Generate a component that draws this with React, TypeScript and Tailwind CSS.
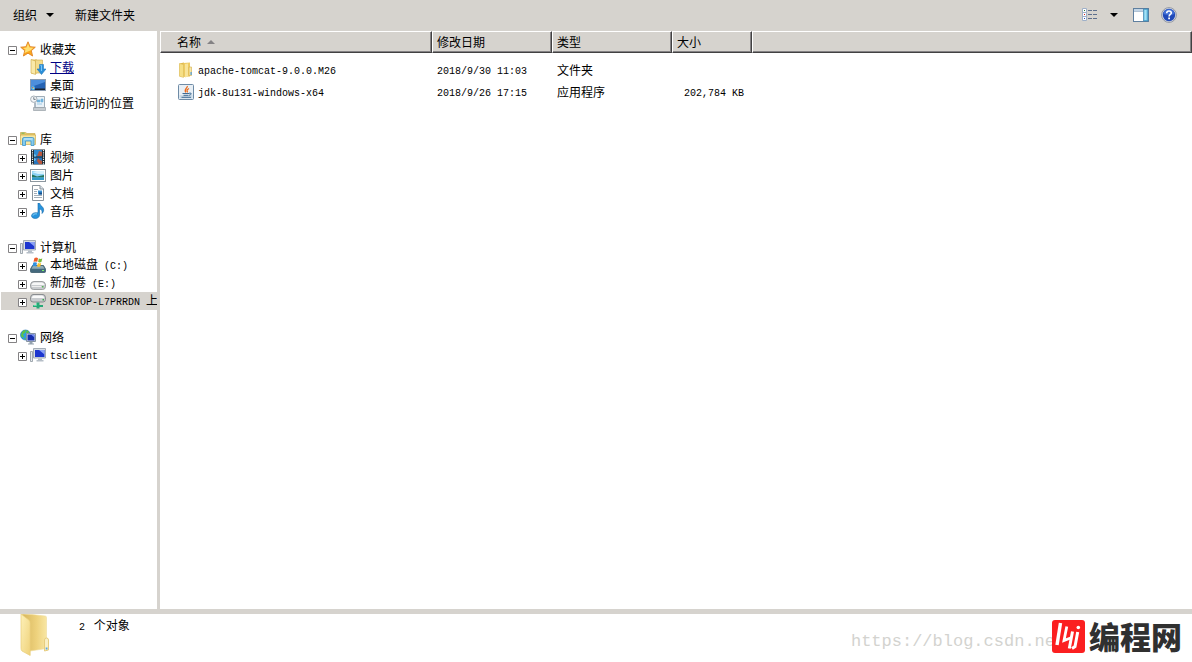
import React, { useState } from 'react';

interface TreeNode {
  id: string;
  label: string;
  latin?: string;
  tail?: string;
  icon: React.FC;
  expandable?: boolean;
  hot?: boolean;
}

interface TreeGroup extends TreeNode {
  children: TreeNode[];
}

interface FileEntry {
  name: string;
  modified: string;
  type: string;
  size?: string;
  icon: React.FC;
}

const Icon: React.FC<{ children: React.ReactNode }> = ({ children }) => (
  <svg width="16" height="16" viewBox="0 0 16 16" className="shrink-0" aria-hidden="true">
    {children}
  </svg>
);

const StarIcon = () => (
  <Icon>
    <path d="M8 .8l2.1 4.9 5.2.5-4 3.5 1.300 5.300L8 12.200 3.400 15l1.300-5.300-4-3.500 5.200-.5z" fill="#fba81c" stroke="#e08326" strokeWidth=".9" strokeLinejoin="round" />
    <path d="M8 2.500l1.500 3.900 3.900.4-3 2.600L8 10.600 4.500 12l1-3.500L3 7l3.500-.6z" fill="#ffdf73" />
  </Icon>
);

const DownloadsIcon = () => (
  <Icon>
    <path d="M1 .5h6v14H1z" fill="#e6c35c" />
    <path d="M5 1h7.500v13H5z" fill="#f3dc8d" stroke="#cfa944" strokeWidth=".6" />
    <path d="M1 .5l4.500 1.500v13.500L1 14z" fill="#f9e9a9" stroke="#cfa944" strokeWidth=".6" />
    <path d="M9.500 5.500h4V10H16l-4.500 5.500L7 10h2.500z" fill="#2b8fd9" stroke="#2478bd" strokeWidth=".6" />
    <path d="M10.500 6.500h1V12" stroke="#7cc7f4" fill="none" />
  </Icon>
);

const DesktopIcon = () => (
  <Icon>
    <rect x=".5" y="2.500" width="15" height="11" fill="#2563b4" stroke="#8b9cb1" />
    <path d="M1 3h14v2L1 10z" fill="#4d8fdc" />
    <path d="M5 11.500h10V13H5z" fill="#1c2531" />
    <circle cx="3" cy="11" r="2" fill="#58b6ee" />
    <path d="M2 10h1v1H2z" fill="#f2703a" />
    <path d="M3 11h1v1H3z" fill="#ffd44b" />
  </Icon>
);

const RecentIcon = () => (
  <Icon>
    <path d="M5 1.500h9.500v11H5z" fill="#e9f1f7" stroke="#9fadb8" />
    <path d="M7 5h3v2H7zM11 4h2v3h-2zM7 9h5" fill="#6fb3dd" stroke="#6fb3dd" strokeWidth=".6" />
    <path d="M3.500 12.500h12v3h-12z" fill="#c6ccd1" stroke="#979fa6" strokeWidth=".7" />
    <circle cx="3.800" cy="4.200" r="3.200" fill="#f3f5f7" stroke="#a7b0b8" />
    <path d="M3.800 2.200v2.200h1.800" stroke="#53616e" fill="none" strokeWidth=".8" />
    <path d="M5 8v5" stroke="#91a0ad" />
  </Icon>
);

const LibraryIcon = () => (
  <Icon>
    <path d="M.5 3V1.500h5L7 2.500h8V5H.5z" fill="#e5c866" stroke="#c2a245" strokeWidth=".6" />
    <path d="M1.500 1.700h3v1h-3z" fill="#71b756" />
    <path d="M.5 4h15v9.500H.5z" fill="#f7e6a0" stroke="#cfae52" strokeWidth=".7" />
    <path d="M2.500 14.500V8q0-1.500 1.500-1.500h8.500Q14 6.500 14 8v6.500h-3V10H5.500v4.500z" fill="#83cbee" stroke="#3c93c8" strokeWidth=".8" />
    <path d="M4 8h8.500" stroke="#d4f0fc" />
  </Icon>
);

const VideoIcon = () => (
  <Icon>
    <path d="M1 .5h14v15H1z" fill="#17242e" />
    <path d="M4 1h8v6.500H4z" fill="#2f8ad0" />
    <path d="M4 8.500h8V15H4z" fill="#2776bd" />
    <path d="M9 2l3 1v4H7l1-2zM8 9l2 2 2 1v3H9L7 12z" fill="#b8583f" />
    <path d="M4 5l2 1v1.500H4zM4 9l2 1-1 2H4z" fill="#69c1ec" />
    <path d="M2.500 1v15M13.500 1v15" stroke="#f4f7f9" strokeWidth="1.200" strokeDasharray="1.200 1" />
  </Icon>
);

const PictureIcon = () => (
  <Icon>
    <rect x=".5" y="2.500" width="15" height="12" fill="#fff" stroke="#8d979f" />
    <path d="M2 4h12v9H2z" fill="#8dd2f5" />
    <path d="M2 5l5-1h7v3H8z" fill="#d7f1fc" />
    <path d="M2 7.500q3 1 5 2L14 8v2.500H2z" fill="#26755d" />
    <path d="M2 10.500h12V13H2z" fill="#329bcb" />
  </Icon>
);

const DocumentIcon = () => (
  <Icon>
    <path d="M2.500.5H10L13.500 4v11.500h-11z" fill="#fff" stroke="#89939c" />
    <path d="M10 .5V4h3.500" fill="#dce4ea" stroke="#89939c" />
    <path d="M4 4.500h4M4 6.500h3M4 8.500h3M4 10.500h8M4 12.500h8" stroke="#96a4b0" strokeWidth=".9" />
    <path d="M8 5.500h4v4H8z" fill="#3790d3" />
    <path d="M9 7.500h3v2H9z" fill="#17508d" />
  </Icon>
);

const MusicIcon = () => (
  <Icon>
    <path d="M8 0h1.500c.4 3 4.500 3.500 4.200 7.200-.2 1.500-.9 2.600-1.700 3.300.5-2.500-.3-3.800-2.500-4.700V12c0 2-1.800 3.500-4.200 3.500C3 15.500 1.500 14.400 1.500 12.800c0-2 2.300-3.400 5-3.100H8z" fill="#2793dc" stroke="#1769aa" strokeWidth=".6" />
    <path d="M3 12.500c.5-1.300 2-1.900 3.800-1.600" stroke="#98dbfb" fill="none" />
  </Icon>
);

const ComputerIcon = () => (
  <Icon>
    <path d="M.5 4.500h2v10h-2z" fill="#e7ebee" stroke="#8a949d" strokeWidth=".8" />
    <path d="M3.500 1.500h12v9.500h-12z" fill="#d6dde4" stroke="#a3acb6" />
    <path d="M5 3h9.500v7H5z" fill="#1c36cf" />
    <path d="M9 3h5.500v4.500z" fill="#8ba2f5" />
    <path d="M8 11.500h4v1.500h1.500v1.500h-7V13H8z" fill="#b5bec7" />
  </Icon>
);

const SystemDriveIcon = () => (
  <Icon>
    <path d="M2.500 8.500h11L15.500 12v2.500q0 1-1 1h-13q-1 0-1-1V12z" fill="#44697d" stroke="#3a5a6b" strokeWidth=".8" />
    <path d="M3 9h10l1.500 2.700h-13z" fill="#8fabb5" />
    <path d="M12 13h2v1h-2z" fill="#7df06e" />
    <path d="M4.500 1q2-1 3.500.2L7.300 4.800Q5.500 4 3.500 4.800z" fill="#ee5a28" />
    <path d="M8.800 1.500q1.800.8 3.500 0l-.9 3.600q-1.700.8-3.300 0z" fill="#79b93c" />
    <path d="M3.300 5.600Q5.300 4.800 7 5.700L6.200 9.300q-1.700-.8-3.700 0z" fill="#2f8fdf" />
    <path d="M7.900 6q1.700.8 3.300 0l-.9 3.500q-1.700.7-3.300 0z" fill="#fbc02b" />
  </Icon>
);

const DriveIcon = () => (
  <Icon>
    <path d="M.5 9.500Q1 6.500 4 6.500h8q3 0 3.500 3v2q0 3-3 3h-9q-3 0-3-3z" fill="#c8cbce" stroke="#8b8e91" strokeWidth=".8" />
    <path d="M1.500 10Q2 7.500 4 7.500h8q2 0 2.500 2.500z" fill="#f7f7f7" />
    <path d="M2 11.500h9" stroke="#eee" />
    <path d="M12 11h1.500v1.500H12z" fill="#55b352" />
  </Icon>
);

const NetworkDriveIcon = () => (
  <Icon>
    <path d="M.5 4.500Q1 1.500 3 1.500h10q2 0 2.500 3v2q0 2.500-2.500 2.500H3Q.5 9 .5 6.500z" fill="#c8cbce" stroke="#787c80" strokeWidth=".8" />
    <path d="M1.800 5q.2-2.500 2.200-2.500h8q2 0 2.200 2.500z" fill="#f9f9f9" />
    <path d="M12.500 6H14v1.500h-1.500z" fill="#35a94b" />
    <path d="M6.500 9.500h3V12H13v2H9.500v1.500h-3V14H3v-2h3.500z" fill="#28a978" />
    <path d="M3.500 12.500h3v-2" stroke="#6bdcae" fill="none" />
  </Icon>
);

const NetworkIcon = () => (
  <Icon>
    <circle cx="5.500" cy="6" r="5" fill="#2c9fe0" stroke="#1a6eb3" strokeWidth=".6" />
    <path d="M2 3q2-2.300 4-1.800L5 4 3 5l1 3-2 .500-1-2zM7 1l2 1.500L8 5 6 4zM4 9l2 .500-.500 1.500z" fill="#5ec343" />
    <path d="M6.500 4.500h9v8h-9z" fill="#dbe2e8" stroke="#8593a1" />
    <path d="M7.500 5.500h7v6h-7z" fill="#172eae" />
    <path d="M11 5.500h3.500v3z" fill="#7891f1" />
    <path d="M9.500 13h3v1.500h1.500v1H8v-1h1.500z" fill="#94a2af" />
  </Icon>
);

const FolderIcon = () => (
  <Icon>
    <path d="M1.500 1.500L6 .5v14H1.500z" fill="#dfb84b" />
    <path d="M5.500 1l6.500-.5v14l-6.500.5z" fill="#eecb63" />
    <path d="M1.500 1.500l4 1v13l-4-1.300z" fill="#f6df85" stroke="#dcbb56" strokeWidth=".5" />
    <path d="M7 2l3-.5v13L7 15.500z" fill="#f8e49a" />
    <path d="M11 5h2.500v8.500H11z" fill="#f7e7a6" stroke="#d4ad48" strokeWidth=".6" />
    <path d="M12.500 10h1.200v3h-1.200z" fill="#4a9be0" />
  </Icon>
);

const JavaIcon = () => (
  <Icon>
    <rect x=".5" y=".5" width="15" height="15" rx="1" fill="#e8eff5" stroke="#6e8ba6" />
    <path d="M1.500 11h13v3.500h-13z" fill="#cbdae6" />
    <path d="M9.300 2C10 4 5.500 5 7.800 8.500M11 4.500c-2 1-2.700 2-1.300 3.800" stroke="#ec6b1c" strokeWidth="1.300" fill="none" />
    <path d="M4.500 9.500H11M5.500 11.300h5M3.500 13.300H13M11 9.200q2.700-.5 2.300.8-.3.900-2.300 1.300" stroke="#3f6b94" strokeWidth="1" fill="none" />
  </Icon>
);

const ViewIcon = () => (
  <Icon>
    <path d="M.5 1.500h4v4h-4zM.5 5.500h4v4h-4zM.5 9.500h4v4h-4z" fill="#fff" stroke="#9fb0c8" />
    <path d="M2 3h1v1H2z" fill="#2c7a37" />
    <path d="M2 7h1v1H2z" fill="#d32020" />
    <path d="M2 11h1v1H2z" fill="#2052c8" />
    <path d="M6 3.500h4M11 3.500h4M6 7.500h4M11 7.500h4M6 11.500h4M11 11.500h4" stroke="#5d6f8d" />
  </Icon>
);

const PaneIcon = () => (
  <Icon>
    <rect x=".5" y="1.500" width="15" height="13" fill="#fff" stroke="#5f7f9f" />
    <path d="M1 2h14v2H1z" fill="#c3d5e6" />
    <path d="M10.500 2H15v12h-4.500z" fill="#66bfe3" stroke="#3d83ae" strokeWidth=".7" />
    <path d="M12.500 3v10" stroke="#a5e0f5" strokeWidth="2" />
    <path d="M1 4.500h9" stroke="#8fa9c3" strokeWidth=".7" />
  </Icon>
);

const HelpIcon = () => (
  <Icon>
    <circle cx="8" cy="8" r="7.400" fill="#d5d9e2" stroke="#8b919d" strokeWidth=".9" />
    <circle cx="8" cy="8" r="6.200" fill="#2049b8" />
    <path d="M2.300 7a5.800 5.800 0 0 1 11.400 0Q8 9 2.300 7z" fill="#4270d6" />
    <path d="M5.700 6.200Q5.800 4 8 4t2.300 1.900c0 1.500-2.200 1.600-2.200 3.500" stroke="#fff" strokeWidth="1.600" fill="none" />
    <path d="M7.200 10.600h1.800v1.600H7.200z" fill="#fff" />
  </Icon>
);

const BigFolderIcon = () => (
  <svg width="30" height="42" viewBox="0 0 30 42" className="shrink-0" aria-hidden="true">
    <defs>
      <linearGradient id="folderFront" x1="0" y1="0" x2="1" y2="1">
        <stop offset="0%" stopColor="#fdf0b8" />
        <stop offset="100%" stopColor="#efd27a" />
      </linearGradient>
      <linearGradient id="folderBack" x1="0" y1="0" x2="1" y2="0">
        <stop offset="0%" stopColor="#d6b55c" />
        <stop offset="60%" stopColor="#eed27d" />
        <stop offset="100%" stopColor="#f8e6a3" />
      </linearGradient>
    </defs>
    <path d="M2 0l10 .5 13 1.500q1.500 0 1.500 1.500v31L10 37z" fill="url(#folderBack)" stroke="#efdb9c" strokeWidth=".6" />
    <path d="M24.500 26q0-2 2-2t2 2v10l-4 1z" fill="#faf0c5" stroke="#e6cd80" />
    <path d="M25.700 33.500h1.800v2h-1.800z" fill="#58a6e7" />
    <path d="M1 0l8 6q1.200 1 1.200 3v32.500L2 37Q1 36 1 34z" fill="url(#folderFront)" stroke="#e8cd78" strokeWidth=".7" />
  </svg>
);

const BrandMark = () => (
  <svg width="33" height="33" viewBox="0 0 33 33" className="relative -ml-[3px] shrink-0" aria-hidden="true">
    <rect width="33" height="33" rx="3" fill="#fb1f20" />
    <path d="M8.500 3L5 25" stroke="#fff" strokeWidth="3.400" fill="none" />
    <path d="M14.800 6.500L12 20.500l6.500-2.500" stroke="#fff" strokeWidth="2.800" fill="none" />
    <path d="M20.500 11.500L17.300 28.500M25.700 12L23 26.500l-3 2" stroke="#fff" strokeWidth="3" fill="none" />
    <circle cx="26.300" cy="7.500" r="1.800" fill="#fff" />
  </svg>
);

const Caret = () => (
  <svg width="8" height="4" viewBox="0 0 8 4" aria-hidden="true">
    <path d="M0 0h8L4 4z" fill="#000" />
  </svg>
);

const groups: TreeGroup[] = [
  {
    id: 'favorites',
    label: '收藏夹',
    icon: StarIcon,
    children: [
      { id: 'downloads', label: '下载', icon: DownloadsIcon, hot: true },
      { id: 'desktop', label: '桌面', icon: DesktopIcon },
      { id: 'recent', label: '最近访问的位置', icon: RecentIcon },
    ],
  },
  {
    id: 'libraries',
    label: '库',
    icon: LibraryIcon,
    children: [
      { id: 'videos', label: '视频', icon: VideoIcon, expandable: true },
      { id: 'pictures', label: '图片', icon: PictureIcon, expandable: true },
      { id: 'documents', label: '文档', icon: DocumentIcon, expandable: true },
      { id: 'music', label: '音乐', icon: MusicIcon, expandable: true },
    ],
  },
  {
    id: 'computer',
    label: '计算机',
    icon: ComputerIcon,
    children: [
      { id: 'disk-c', label: '本地磁盘', latin: ' (C:)', icon: SystemDriveIcon, expandable: true },
      { id: 'disk-e', label: '新加卷', latin: ' (E:)', icon: DriveIcon, expandable: true },
      { id: 'remote', label: '', latin: 'DESKTOP-L7PRRDN ', tail: '上', icon: NetworkDriveIcon, expandable: true },
    ],
  },
  {
    id: 'network',
    label: '网络',
    icon: NetworkIcon,
    children: [{ id: 'tsclient', label: '', latin: 'tsclient', icon: ComputerIcon, expandable: true }],
  },
];

const files: FileEntry[] = [
  { name: 'apache-tomcat-9.0.0.M26', modified: '2018/9/30 11:03', type: '文件夹', icon: FolderIcon },
  { name: 'jdk-8u131-windows-x64', modified: '2018/9/26 17:15', type: '应用程序', size: '202,784 KB', icon: JavaIcon },
];

const Mono: React.FC<{ children: React.ReactNode }> = ({ children }) => (
  <span className="font-['Liberation_Mono',monospace] text-[10px] whitespace-pre">{children}</span>
);

const Expander: React.FC<{ open: boolean; label: string; onClick: () => void }> = ({ open, label, onClick }) => (
  <button type="button" aria-label={label} aria-expanded={open} onClick={onClick} className="mt-0.5 shrink-0">
    <svg width="9" height="9" viewBox="0 0 9 9" className="block">
      <path d="M.5.5h8v8h-8z" fill="#fff" stroke="#848284" />
      <path d={open ? 'M2 4.500h5' : 'M2 4.500h5M4.500 2v5'} stroke="#000" />
    </svg>
  </button>
);

const NodeLabel: React.FC<{ node: TreeNode }> = ({ node }) => (
  <>
    {node.label}
    {node.latin && <Mono>{node.latin}</Mono>}
    {node.tail}
  </>
);

const headCell =
  'h-[22px] border border-t-white border-l-white border-r-[#424142] border-b-[#424142] bg-[#d6d3ce] pl-1 text-left font-normal shadow-[inset_-1px_-1px_0_#848284]';

export default function App() {
  const [collapsed, setCollapsed] = useState<string[]>([]);
  const [selected, setSelected] = useState('remote');

  const toggle = (id: string) => {
    setCollapsed(collapsed.includes(id) ? collapsed.filter((c) => c !== id) : [...collapsed, id]);
  };

  return (
    <div className="flex min-h-screen flex-col bg-white font-['Noto_Sans_CJK_SC',sans-serif] text-xs leading-[18px] text-black">
      <header className="flex h-[31px] shrink-0 items-center justify-between bg-[#d6d3ce] pr-[15px] pb-px pl-[13px]">
        <div className="flex items-center gap-[21px]">
          <button type="button" className="flex items-center gap-[9px]">
            组织
            <Caret />
          </button>
          <button type="button">新建文件夹</button>
        </div>
        <div className="flex items-center">
          <button type="button" aria-label="更改视图">
            <ViewIcon />
          </button>
          <button type="button" aria-label="更多选项" className="px-3">
            <Caret />
          </button>
          <button type="button" aria-label="预览窗格" className="ml-[3px]">
            <PaneIcon />
          </button>
          <button type="button" aria-label="帮助" className="ml-3">
            <HelpIcon />
          </button>
        </div>
      </header>

      <main className="flex flex-1">
        <nav className="w-40 shrink-0 overflow-hidden border-r-[3px] border-[#d6d3ce] pt-[9px] pl-px">
          <ul className="space-y-[18px]">
            {groups.map((group) => {
              const open = !collapsed.includes(group.id);
              return (
                <li key={group.id}>
                  <div className="flex h-[18px] items-center pl-[7px]">
                    <Expander open={open} label={group.label} onClick={() => toggle(group.id)} />
                    <button type="button" className="ml-[3px] flex items-center gap-1 whitespace-nowrap">
                      <group.icon />
                      <span>{group.label}</span>
                    </button>
                  </div>
                  {open && (
                    <ul>
                      {group.children.map((node) => (
                        <li
                          key={node.id}
                          className={`flex h-[18px] items-center ${node.expandable ? 'pl-[17px]' : 'pl-[26px]'} ${selected === node.id ? 'bg-[#d6d3ce]' : ''}`}
                        >
                          {node.expandable && (
                            <Expander
                              open={false}
                              label={node.label || node.latin || ''}
                              onClick={() => setSelected(node.id)}
                            />
                          )}
                          <a
                            href={`#${node.id}`}
                            onClick={() => setSelected(node.id)}
                            className="ml-[3px] flex items-center gap-1 whitespace-nowrap"
                          >
                            <node.icon />
                            <span className={node.hot ? 'text-[#000084] underline' : ''}>
                              <NodeLabel node={node} />
                            </span>
                          </a>
                        </li>
                      ))}
                    </ul>
                  )}
                </li>
              );
            })}
          </ul>
        </nav>

        <section className="min-w-0 flex-1">
          <table className="w-full table-fixed border-separate border-spacing-0">
            <colgroup>
              <col className="w-[272px]" />
              <col className="w-[120px]" />
              <col className="w-[120px]" />
              <col className="w-20" />
              <col />
            </colgroup>
            <thead>
              <tr>
                <th className={headCell}>
                  <button type="button" className="ml-3 flex items-center gap-1.5">
                    名称
                    <svg width="8" height="4" viewBox="0 0 8 4" aria-hidden="true">
                      <path d="M4 0l4 4H0z" fill="#848284" />
                    </svg>
                  </button>
                </th>
                <th className={headCell}>
                  <button type="button">修改日期</button>
                </th>
                <th className={headCell}>
                  <button type="button">类型</button>
                </th>
                <th className={headCell}>
                  <button type="button">大小</button>
                </th>
                <td className={headCell} />
              </tr>
            </thead>
            <tbody className="before:block before:h-1.5">
              {files.map((file) => (
                <tr key={file.name} className="h-[22px]">
                  <td className="pl-[18px]">
                    <div className="flex items-center gap-1">
                      <file.icon />
                      <span>
                        <Mono>{file.name}</Mono>
                      </span>
                    </div>
                  </td>
                  <td className="pl-[5px]">
                    <Mono>{file.modified}</Mono>
                  </td>
                  <td className="pl-[5px]">{file.type}</td>
                  <td className="pr-2 text-right">{file.size && <Mono>{file.size}</Mono>}</td>
                  <td />
                </tr>
              ))}
            </tbody>
          </table>
        </section>
      </main>

      <footer className="flex h-[53px] shrink-0 items-start border-t-[5px] border-[#d6d3ce] pr-2.5 pl-5">
        <BigFolderIcon />
        <p className="mt-0.5 ml-[29px]">
          <Mono>2 </Mono> 个对象
        </p>
        <div className="ml-auto flex items-start pt-1.5">
          <span className="pt-2.5 font-['Liberation_Mono',monospace] text-[17px] leading-6 text-[#d3d3cf]">
            https://blog.csdn.ne
          </span>
          <BrandMark />
          <span className="ml-1 text-[31px] leading-8 font-black text-[#303030]">编程网</span>
        </div>
      </footer>
    </div>
  );
}
